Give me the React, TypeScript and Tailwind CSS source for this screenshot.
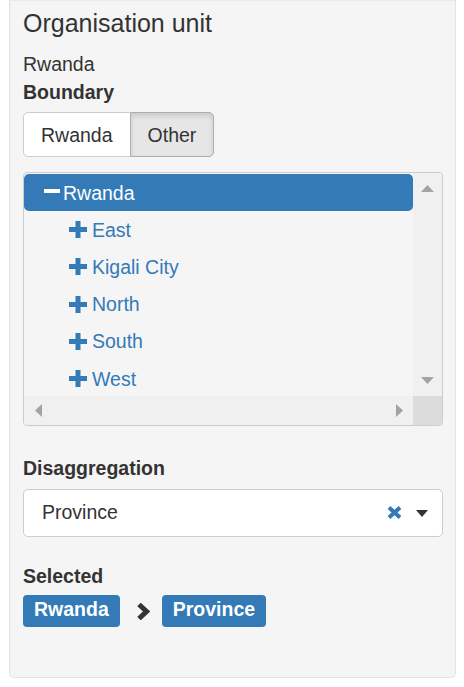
import clsx from 'clsx';

const children = ['East', 'Kigali City', 'North', 'South', 'West'];

function PlusIcon() {
  return (
    <svg width="18" height="17" viewBox="0 0 18 17" className="shrink-0">
      <rect x="0" y="6" width="18" height="5" fill="#337ab7" />
      <rect x="6.5" y="0" width="5" height="17" fill="#337ab7" />
    </svg>
  );
}

function Arrow(props: { dir: 'up' | 'down' | 'left' | 'right' }) {
  const points = {
    up: '0,7 6.5,0 13,7',
    down: '0,0 13,0 6.5,7',
    left: '7,0 7,13 0,6.5',
    right: '0,0 7,6.5 0,13',
  }[props.dir];
  const vertical = props.dir === 'up' || props.dir === 'down';
  return (
    <svg
      width={vertical ? 13 : 7}
      height={vertical ? 7 : 13}
      viewBox={vertical ? '0 0 13 7' : '0 0 7 13'}
    >
      <polygon points={points} fill="#a3a3a3" />
    </svg>
  );
}

function BoundaryButton(props: { label: string; active?: boolean; first?: boolean }) {
  return (
    <button
      type="button"
      className={clsx(
        'h-[45px] border px-[17px] leading-[28px]',
        props.first ? 'rounded-l-[5px]' : '-ml-px rounded-r-[5px]',
        props.active
          ? 'border-[#adadad] bg-[#e6e6e6] shadow-[inset_0_3px_5px_rgba(0,0,0,0.125)]'
          : 'border-[#ccc] bg-white',
      )}
    >
      {props.label}
    </button>
  );
}

export default function App() {
  return (
    <div className="min-h-screen bg-white font-['Liberation_Sans',Arial,sans-serif] text-[19.5px] text-[#333]">
      <div className="ml-[9px] h-[678px] w-[447px] rounded-b-[5px] border border-t-0 border-[#e3e3e3] bg-[#f5f5f5] pl-[13px] pr-[12px] pt-[9px] shadow-[inset_0_1px_1px_rgba(0,0,0,0.05)]">
        <h4 className="text-[25px] leading-[28px]">Organisation unit</h4>
        <div className="mt-[13px] leading-[28px]">Rwanda</div>
        <div className="font-bold leading-[28px]">Boundary</div>

        <div className="mt-[6px] flex">
          <BoundaryButton label="Rwanda" first />
          <BoundaryButton label="Other" active />
        </div>

        {/* tree with native-looking scrollbars */}
        <div className="mt-[15px] grid h-[254px] grid-cols-[1fr_29px] grid-rows-[1fr_29px] overflow-hidden rounded-[4px] border border-[#ccc] bg-[#f5f5f5]">
          <div className="overflow-hidden pt-px">
            <div className="flex h-[37.2px] items-center gap-[3px] rounded-[5px] bg-[#337ab7] pl-[20px] leading-[28px] text-white">
              <span className="mb-[3px] block h-[4px] w-[16px] bg-white" />
              <span>Rwanda</span>
            </div>
            {children.map((name) => (
              <div key={name} className="flex h-[37.2px] items-center gap-[5px] pl-[45px] leading-[28px] text-[#337ab7]">
                <PlusIcon />
                <span>{name}</span>
              </div>
            ))}
          </div>
          <div className="flex flex-col items-center justify-between bg-[#f0f0f0] py-[12px]">
            <Arrow dir="up" />
            <Arrow dir="down" />
          </div>
          <div className="flex items-center justify-between bg-[#f0f0f0] pl-[11px] pr-[10px]">
            <Arrow dir="left" />
            <Arrow dir="right" />
          </div>
          <div className="bg-[#dcdcdc]" />
        </div>

        <div className="mt-[28px] font-bold leading-[28px]">Disaggregation</div>
        <div className="mt-[7px] flex h-[48px] items-center rounded-[5px] border border-[#ccc] bg-white pb-[2px] pl-[18px] pr-[14px]">
          <span className="flex-1 leading-[28px]">Province</span>
          <svg width="15" height="13" viewBox="0 0 15 13" className="mt-[1px]">
            <path d="M2 1.5 L13 11.5 M13 1.5 L2 11.5" stroke="#337ab7" strokeWidth="4" />
          </svg>
          <svg width="12" height="7" viewBox="0 0 12 7" className="ml-[14px] mt-[2px]">
            <polygon points="0,0 12,0 6,7" fill="#333" />
          </svg>
        </div>

        <div className="mt-[25px] font-bold leading-[28px]">Selected</div>
        <div className="mt-[5px] flex items-center">
          <span className="flex h-[32px] items-center rounded-[4px] bg-[#337ab7] px-[11px] pb-[2px] font-bold text-white">
            Rwanda
          </span>
          <svg width="14" height="17" viewBox="0 0 14 17" className="ml-[16px] mr-[12px]">
            <polyline points="3,1.5 10.5,8.5 3,15.5" fill="none" stroke="#333" strokeWidth="5" />
          </svg>
          <span className="flex h-[32px] items-center rounded-[4px] bg-[#337ab7] px-[11px] pb-[2px] font-bold text-white">
            Province
          </span>
        </div>
      </div>
    </div>
  );
}
